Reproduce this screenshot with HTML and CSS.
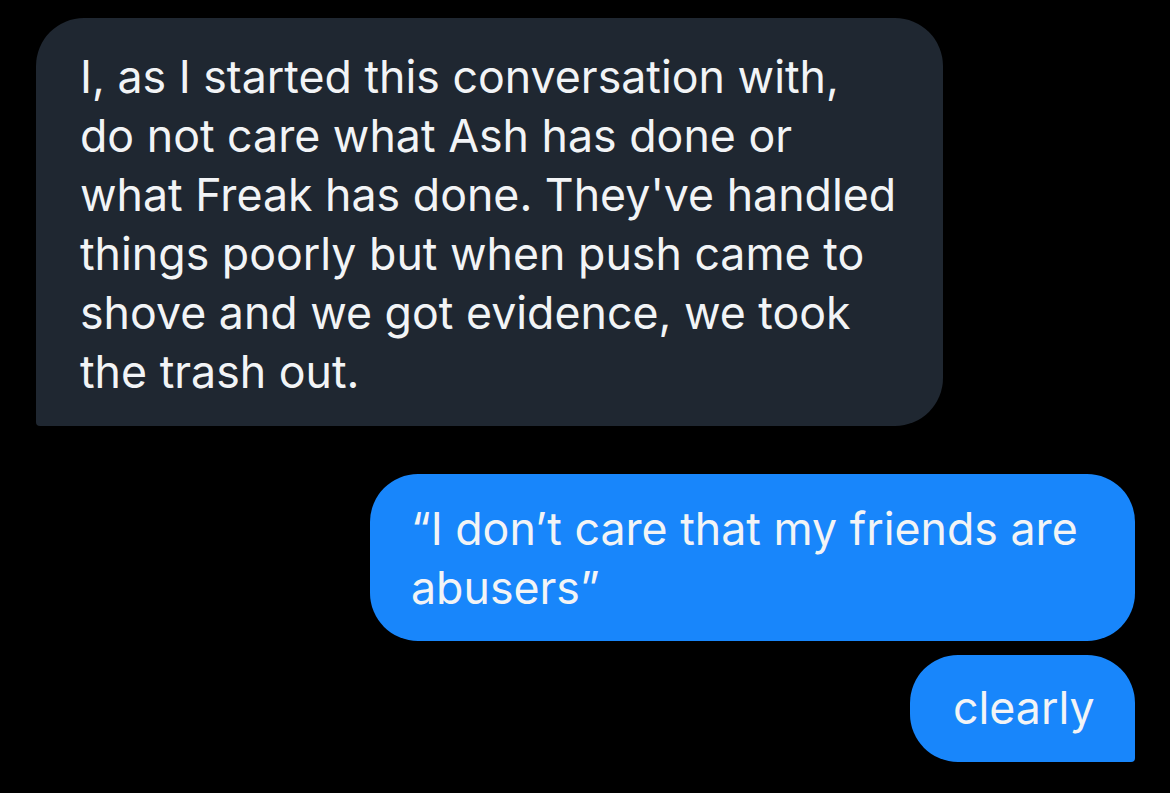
FILE: index.html
```html
<!DOCTYPE html>
<html>
<head>
<meta charset="utf-8">
<link rel="stylesheet" href="styles.css">
</head>
<body>
<div class="chat">
  <div class="msg received">I, as I started this conversation with,<br>do not care what Ash has done or<br>what Freak has done. They've handled<br>things poorly but when push came to<br>shove and we got evidence, we took<br>the trash out.</div>
  <div class="msg sent first">“I don’t care that my friends are<br>abusers”</div>
  <div class="msg sent last">clearly</div>
</div>
</body>
</html>
```
FILE: styles.css
```css
html, body {
  margin: 0;
  padding: 0;
  background: #000;
}
.chat {
  width: 1170px;
  height: 793px;
  box-sizing: border-box;
  padding: 18px 36px 0 36px;
  display: flex;
  flex-direction: column;
  font-family: "Inter", "Noto Sans", sans-serif;
  font-size: 44.7px;
  line-height: 59px;
  color: #f2f4f6;
}
.msg {
  box-sizing: border-box;
  white-space: nowrap;
}
.received {
  align-self: flex-start;
  width: 907px;
  height: 408px;
  background: #1f2731;
  border-radius: 48px 48px 48px 4px;
  padding: 30px 0 0 44px;
}
.sent {
  align-self: flex-end;
  background: #1886fb;
  margin-right: -1px;
}
.first {
  margin-top: 48px;
  width: 765px;
  height: 167px;
  border-radius: 48px;
  padding: 26px 0 0 41px;
}
.last {
  margin-top: 14px;
  width: 225px;
  height: 107px;
  border-radius: 48px 48px 4px 48px;
  padding: 24px 0 0 43px;
}
```
